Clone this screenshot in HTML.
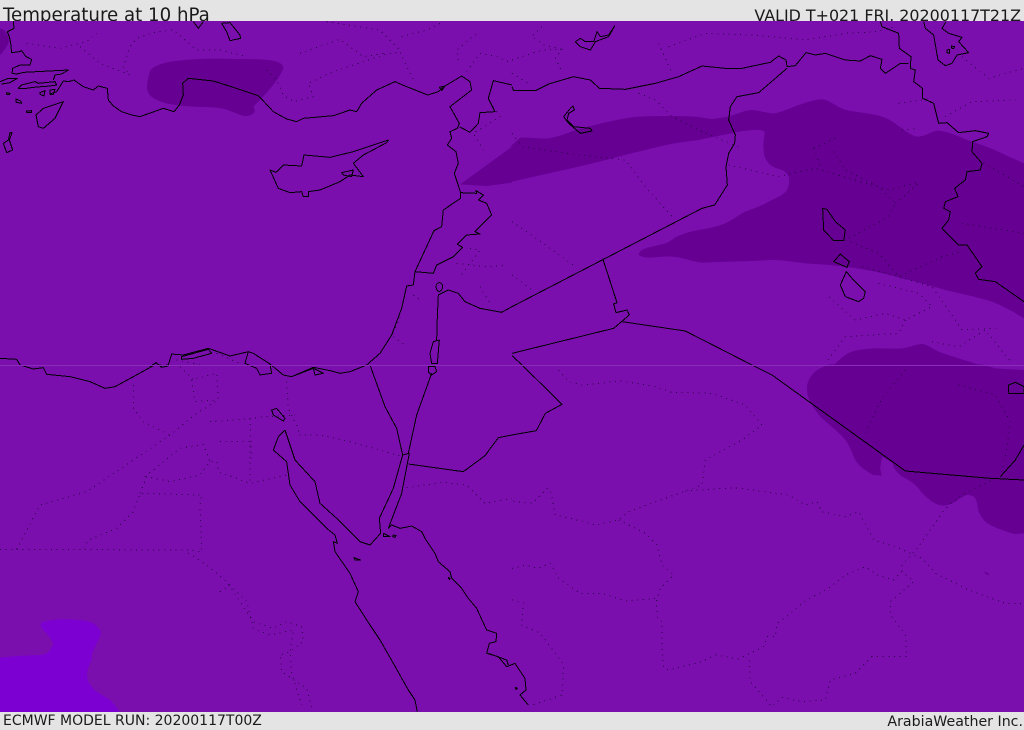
<!DOCTYPE html>
<html><head><meta charset="utf-8"><title>Temperature at 10 hPa</title>
<style>
html,body{margin:0;padding:0;width:1024px;height:729px;overflow:hidden;background:#e4e4e4}
.t{position:absolute;font-family:"DejaVu Sans",sans-serif;color:#1a1a1a;white-space:nowrap;line-height:1}
svg{position:absolute;left:0;top:21px;display:block}
.l{fill:none;stroke:#000;stroke-width:3;stroke-linejoin:round}
.d{fill:none;stroke:#1c0030;stroke-opacity:.8;stroke-width:3;stroke-dasharray:3 14}
</style></head><body>
<div class="t" style="left:3px;top:7px;font-size:18.2px">Temperature at 10 hPa</div>
<div class="t" style="right:3px;top:8px;font-size:15.9px">VALID T+021 FRI. 20200117T21Z</div>
<div class="t" style="left:3px;top:714px;font-size:14px">ECMWF MODEL RUN: 20200117T00Z</div>
<div class="t" style="right:1px;top:715px;font-size:14.2px">ArabiaWeather Inc.</div>
<svg width="1024" height="691" viewBox="0 21 1024 691">
<rect x="0" y="21" width="1024" height="691" fill="#7a0fae"/>
<!-- fills -->
<g transform="scale(.33333)" fill="#660093">
<path d="M452,210C470,190 520,178 640,176L780,178C830,180 852,190 850,205C840,235 800,280 760,320C770,335 760,348 735,348C710,345 690,325 640,322C580,320 530,318 500,310C460,300 440,285 441,260C443,240 445,225 452,210Z"/>
<path d="M0,85C20,90 30,110 25,130C15,150 5,160 0,165Z"/>
<path d="M1380,553L1536,440V548L1460,558Z"/>
</g>
<g transform="translate(512,0) scale(.33333)" fill="#660093">
<path d="M-2,437L25,413C60,412 85,417 110,415C140,410 165,400 190,390C250,375 320,355 380,350C440,347 500,348 550,350L600,357L650,350C680,340 700,330 720,330C750,332 770,342 790,340C820,332 840,322 860,315C890,305 910,298 930,298C950,300 960,310 970,315C990,328 1010,333 1030,335C1060,340 1090,343 1110,350C1140,360 1150,372 1170,385C1190,400 1205,410 1220,410C1245,408 1260,392 1280,392C1310,395 1345,412 1380,425C1420,438 1450,450 1480,465L1536,490V955C1500,932 1470,918 1440,905C1400,892 1350,882 1300,870C1250,855 1200,842 1150,830C1100,815 1050,808 1000,800C960,795 920,792 880,790C850,787 815,780 780,780C735,782 690,785 650,785L570,788C540,785 510,772 480,770C450,768 420,775 400,772C385,770 378,765 380,760C385,752 395,747 400,745L460,730C475,725 480,718 490,712C510,702 535,695 560,690C590,685 615,680 640,670C665,658 680,645 700,635C725,625 750,618 770,605C795,592 815,585 825,570C832,555 832,542 830,530C825,520 820,515 810,510C795,505 782,502 770,490C758,475 755,465 755,450C752,430 758,410 758,395C745,388 735,390 720,390C700,392 685,393 670,398C635,405 595,412 560,420C520,425 480,430 440,440C410,448 380,455 350,462C300,475 250,488 200,500L0,545H-2Z"/>
<path d="M965,1097C985,1075 1000,1062 1020,1055C1045,1047 1075,1045 1100,1045C1125,1045 1150,1047 1170,1045C1195,1042 1215,1032 1230,1032C1245,1033 1255,1042 1270,1050C1290,1060 1315,1067 1340,1075C1365,1083 1390,1090 1410,1097Z"/>
</g>
<g transform="translate(512,365) scale(.33333)" fill="#660093">
<path d="M950,-2C925,8 905,20 900,30C888,45 885,58 885,70C885,85 888,98 895,110C905,128 915,145 930,160C955,182 985,205 1000,225C1015,245 1020,265 1030,285C1040,300 1048,308 1060,315C1070,322 1078,328 1085,330L1108,332C1110,325 1105,318 1105,310C1105,298 1110,288 1110,275L1143,295C1143,305 1147,310 1150,315C1160,328 1170,335 1180,340C1195,347 1205,355 1215,365C1230,385 1245,400 1260,410C1272,418 1285,422 1295,422C1310,420 1320,416 1330,410C1345,400 1355,392 1365,390C1378,390 1385,394 1390,400C1398,415 1396,428 1400,440C1405,452 1412,462 1420,470C1435,482 1455,490 1470,495C1485,500 1498,505 1510,507L1536,505V15L1450,10L1410,-2Z"/>
<path d="M1418,620L1430,625L1430,632L1418,625Z"/>
</g>
<path transform="translate(0,365) scale(.33333)" fill="#7d00d2" d="M0,878C40,873 80,871 120,870C140,868 150,862 160,835C155,825 148,815 140,805C132,797 125,790 122,785C122,778 123,775 125,772C140,767 160,764 180,763C200,762 220,763 240,765C258,767 270,770 280,775C290,783 298,790 303,800C302,810 300,817 295,825C288,840 280,855 275,870C274,878 276,884 272,890C268,900 264,910 262,920C260,932 262,940 265,950C272,962 280,972 290,980C305,990 318,997 330,1005C342,1016 350,1028 358,1041H0Z"/>
<!-- dotted boundaries -->
<g transform="scale(.33333)" class="d" shape-rendering="crispEdges">
<path d="M80,130L180,145L260,125L290,100"/>
<path d="M240,140L300,190L390,225L370,200L390,140L410,115L470,95L520,90L590,150L660,150L740,170"/>
<path d="M800,210L830,240L850,285L880,305L940,290L925,250L1000,215L1150,165L1200,155L1240,240"/>
<path d="M900,160L1020,118L1090,170L1150,160"/>
<path d="M1205,110L1280,90L1320,70"/>
<path d="M1375,180L1370,150L1430,100"/>
<path d="M1400,215L1440,160L1490,170L1536,190"/>
<path d="M1480,320L1500,350L1420,400L1450,450"/>
<path d="M1370,790L1460,800L1520,795M1410,745L1440,750L1380,830M1440,860L1470,910"/>
<path d="M1240,885L1260,900M1180,1010L1220,1040M1200,950L1180,1000"/>
<path d="M980,65L1140,90L1200,150"/>
<path d="M530,1080L600,1095M650,1060L720,1090"/>
</g>
<g transform="translate(512,0) scale(.33333)" class="d" shape-rendering="crispEdges">
<path d="M0,180L90,150L150,148L130,175L150,215"/>
<path d="M90,80L60,110L95,135L150,148"/>
<path d="M440,130L480,220M470,140L580,100L720,105L880,120L1000,100L1090,95L1150,80"/>
<path d="M380,280L430,300L480,350L580,400L680,440"/>
<path d="M0,400L30,440L200,465L340,480L400,560L480,650"/>
<path d="M650,495L800,530L840,520L910,505L1130,570L1225,545"/>
<path d="M905,445L980,410M905,445L925,500M965,455L1000,510L1100,560L1150,610L1130,650L1000,720"/>
<path d="M1150,610L1225,545"/>
<path d="M0,665L80,720L190,800M0,825L60,870"/>
<path d="M1160,310L1260,295M1300,350L1380,305L1510,300M1170,390L1220,385"/>
<path d="M1000,720L1100,760L1160,830L1290,770L1350,755"/>
<path d="M1050,800L1160,830L1260,860L1330,960L1350,990L1450,985"/>
<path d="M1100,850L1220,880L1260,920L1180,960L1120,940L1030,960L950,890"/>
<path d="M1180,960L1160,1000L1000,1010L940,1090"/>
<path d="M1260,1025L1340,1040L1420,990L1500,1090"/>
<path d="M1350,670L1536,700M1400,480L1536,560M1350,170L1430,235L1536,205M0,220L50,250"/>
</g>
<g transform="translate(0,365) scale(.33333)" class="d" shape-rendering="crispEdges">
<path d="M0,553L560,555L605,560L600,420L605,390L420,385L400,440L350,490L265,525L250,553"/>
<path d="M50,553L120,420L260,380L510,210L590,145L655,105L650,25L575,45L585,110L650,105"/>
<path d="M420,385L440,335L510,350L600,330L630,290L650,290L655,320L750,355L860,330"/>
<path d="M435,335L540,250L610,238L630,290"/>
<path d="M400,60L400,130L430,170L510,210"/>
<path d="M565,565L620,600L680,650L760,770L820,790L860,770L905,785L910,830L870,860L840,870L845,920L920,970L935,1025"/>
<path d="M660,680L690,660L740,710L760,790L810,810L880,795L870,860L875,925L905,1020"/>
<path d="M630,170L700,165L800,155L885,150"/>
<path d="M860,50L865,130L895,190L895,210L960,210L1050,230L1200,272"/>
<path d="M660,230L750,230L750,350M750,160L755,280"/>
<path d="M1220,368L1330,352L1400,360L1455,415L1536,400"/>
<path d="M540,5L580,45"/>
</g>
<g transform="translate(512,365) scale(.33333)" class="d" shape-rendering="crispEdges">
<path d="M140,15L170,50L210,60L330,48L430,65L480,82L600,85L700,120L750,180L690,225L580,285L570,360L520,378L350,440L320,465L250,480L205,467L130,450L115,375L105,370L60,415L0,408"/>
<path d="M320,465L400,505L435,540L450,600L485,630L445,670L433,710L435,755L450,770L450,860L455,908L470,915L570,890L610,870L680,882L755,845L765,815L790,815L795,775L835,745L875,710L950,670L1000,630L1060,605L1095,630L1145,645L1170,620L1205,650L1135,710L1135,750L1180,810L1185,875L1080,875L1030,925L955,945L940,1005L870,1010L810,997L780,1025L715,950L712,885"/>
<path d="M520,378L670,368L830,390L880,420L915,410L930,440L1000,455L1040,440L1085,525L1150,545L1230,580L1270,625L1370,675L1480,715L1536,715"/>
<path d="M1170,620L1170,600L1220,545L1300,430L1350,390L1440,345"/>
<path d="M0,610L40,600L75,610L115,595L140,640L205,685L270,685L340,708L433,700"/>
<path d="M0,705L35,715L28,780L85,805L155,900L150,990L60,1020"/>
<path d="M1180,15L1110,100L1060,205M1340,60L1450,90L1495,170L1480,280L1465,335"/>
</g>
<!-- solid coast and borders -->
<g transform="scale(.33333)" class="l" shape-rendering="crispEdges">
<path d="M40,63L42,85L22,95L28,110L32,130L35,158L58,155L65,152L78,170L95,178L90,195L60,195L38,205L36,220L50,222L72,217L205,210L185,222L165,225L160,240"/>
<path d="M55,265L65,255L105,245L115,250L165,245L170,255L150,258L100,262L80,265L60,265Z"/>
<path d="M0,245L25,235L52,235L30,248L5,252"/>
<path d="M150,282L170,275L190,243L205,245L222,240L250,260L280,270L295,258L322,265L325,300L340,318L365,335L395,345L420,350L490,325L522,335L538,315L550,285L548,250L565,235L640,243L700,262L775,287L820,335L860,357L890,365L910,355L1000,347L1050,330L1070,335L1085,310L1130,270L1185,245L1215,258L1283,285L1315,275L1335,258L1385,228L1410,245L1415,270L1350,320L1378,370L1372,385L1350,395L1355,415L1342,435L1368,455L1375,490L1363,520L1382,578L1382,595L1330,630L1325,680L1302,692L1245,815L1240,855L1220,858L1205,925L1175,1005L1140,1060L1100,1095"/>
<path d="M1382,578L1430,580L1428,572L1450,585L1435,600L1460,610L1475,645L1425,695L1440,702L1400,705L1372,733L1388,742L1360,770L1310,795L1300,820L1245,815"/>
<path d="M1378,380L1410,397L1435,370L1440,338L1485,335L1465,295L1480,242L1536,255"/>
<path d="M1536,920L1505,937L1440,925L1395,905L1375,880L1345,870L1315,885L1312,950L1310,1020"/>
<path d="M1318,848C1305,848 1305,870 1318,875C1332,868 1330,848 1318,848Z"/>
<path d="M1290,1060L1300,1025L1318,1020L1312,1090L1295,1090Z"/>
<path d="M810,510L828,517L850,495L905,498L912,465L990,472L1060,455L1165,420L1160,428L1090,465L1060,490L1090,530L1050,525L1020,545L960,570L925,575L925,590L910,590L905,575L870,578L835,565Z"/>
<path d="M1025,518L1060,510L1055,530L1030,525Z"/>
<path d="M190,305L130,325L108,345L115,380L130,385L165,355Z"/>
<path d="M30,398L25,420L10,430L20,458L38,450L28,420L36,398Z"/>
<path d="M665,70L690,68L720,105L722,115L690,122L680,95Z"/>
<path d="M580,65L595,85L610,65"/>
<path d="M150,270L165,268L160,283L150,283ZM120,278L135,272L132,288L120,283Z"/>
<path d="M20,278L30,280L28,284L20,283ZM48,297L62,303L65,310L48,307ZM80,333L95,332L95,337L80,337Z"/>
<path d="M1318,262L1335,258L1325,272Z"/>
<path d="M0,1075L50,1078L60,1095"/>
<path d="M450,1100L468,1088L480,1098L505,1095L515,1062L550,1065L625,1045L690,1068L745,1055L760,1060L810,1092L850,1125L875,1130L940,1102L990,1112L1020,1120L1050,1115L1100,1095"/>
<path d="M545,1070L625,1048L635,1060L580,1075L545,1078Z"/>
<path d="M745,1055L735,1090L770,1105L780,1125L815,1120L810,1092"/>
<path d="M880,1128L940,1105L945,1125L970,1120L940,1105"/>
<path d="M475,1095L505,1098L485,1102Z"/>
</g>
<g transform="translate(512,0) scale(.33333)" class="l" shape-rendering="crispEdges">
<path d="M0,260L5,272L70,272L110,252L185,230L235,240L262,265L340,268L430,250L500,230L570,198L640,205L690,205L775,187L800,168L822,180L825,200L850,197L882,158L910,165L940,160L1000,180L1045,183L1075,167L1110,178L1105,205L1120,220L1165,190L1190,190"/>
<path d="M1105,65L1110,80L1160,100L1162,145L1197,170L1195,205L1210,210L1205,245L1232,265L1232,295L1265,310L1280,370L1305,368L1340,398L1390,392L1430,400L1425,410L1382,425L1380,455L1410,490L1405,510L1365,515L1360,540L1328,565L1338,590L1300,605L1295,625L1315,635L1310,660L1290,685L1340,735L1365,735L1410,800L1390,820L1400,838L1450,845L1536,905"/>
<path d="M1235,65L1240,85L1265,105L1278,180L1300,197L1320,190L1335,165L1370,158L1340,125L1350,112L1310,100L1290,85L1302,65"/>
<path d="M1305,150L1312,148L1312,160L1305,158ZM1318,138L1328,140L1325,146L1318,144Z"/>
<path d="M825,205L740,278L675,290L655,320L650,360L670,405L668,430L650,460L642,500L646,555L608,615L570,625L0,920"/>
<path d="M272,775L315,908L305,912L312,938L345,930L352,945L305,985L0,1060"/>
<path d="M330,965L520,993L720,1095"/>
<path d="M0,1067L30,1095"/>
<path d="M183,318L187,330L170,340L165,360L185,380L235,385L240,393L205,400L170,370L155,350L175,325Z"/>
<path d="M190,125L205,140L235,150L250,125L290,110L308,78L290,105L265,110L255,95L245,125L220,125L205,115Z"/>
<path d="M932,625L945,628L970,665L1000,690L995,722L965,722L935,690Z"/>
<path d="M985,762L1012,785L1005,802L965,785Z"/>
<path d="M1003,815L1020,835L1060,875L1055,895L1040,905L1000,890L985,855Z"/>
</g>
<g transform="translate(0,365) scale(.33333)" class="l" shape-rendering="crispEdges">
<path d="M60,0L100,12L130,8L140,28L210,35L270,50L315,70L345,65L400,35L460,2"/>
<path d="M1110,0L1155,125L1190,190L1208,270"/>
<path d="M1285,5L1305,5L1310,20L1295,30L1285,20Z"/>
<path d="M1295,25L1250,150L1225,265"/>
<path d="M855,195L835,215L820,255L860,290L870,360L900,410L980,490L1005,510L1012,535L1000,530L1005,560L1050,625L1075,680L1065,710L1110,780L1140,825L1180,895L1225,975L1245,1005L1252,1040"/>
<path d="M855,195L870,240L885,285L945,350L960,415L1010,460L1080,530L1110,540L1142,505L1138,460L1180,370L1208,270L1228,265L1205,385L1165,490L1175,480L1200,490L1235,483L1265,500L1275,520L1305,565L1315,590L1350,620L1355,640L1385,670L1405,700L1430,730L1460,795L1490,805L1488,830L1468,835L1460,865L1495,875L1520,905L1545,895L1575,940L1578,975L1560,990L1585,1020"/>
<path d="M1465,865L1520,885L1525,900"/>
<path d="M815,135L830,130L855,160L850,168L820,150Z"/>
<path d="M1150,505L1170,515L1150,515ZM1180,510L1188,512L1185,517L1178,515ZM1062,578L1082,585L1065,585Z"/>
<path d="M1345,637L1350,640L1348,644Z"/>
<path d="M1225,297L1390,320L1455,272L1495,218L1536,210"/>
</g>
<g transform="translate(512,365) scale(.33333)" class="l" shape-rendering="crispEdges">
<path d="M30,0L150,118L100,145L73,197L0,210"/>
<path d="M720,0L780,30L1180,318L1435,340L1536,345"/>
<path d="M1465,335L1510,285L1536,240"/>
<path d="M1490,60L1510,52L1536,65L1536,85L1490,85Z"/>
<path d="M10,967L16,970L12,973Z"/>
</g>
<rect x="0" y="365" width="1024" height="1" fill="#8a2db8"/>
</svg>
</body></html>
